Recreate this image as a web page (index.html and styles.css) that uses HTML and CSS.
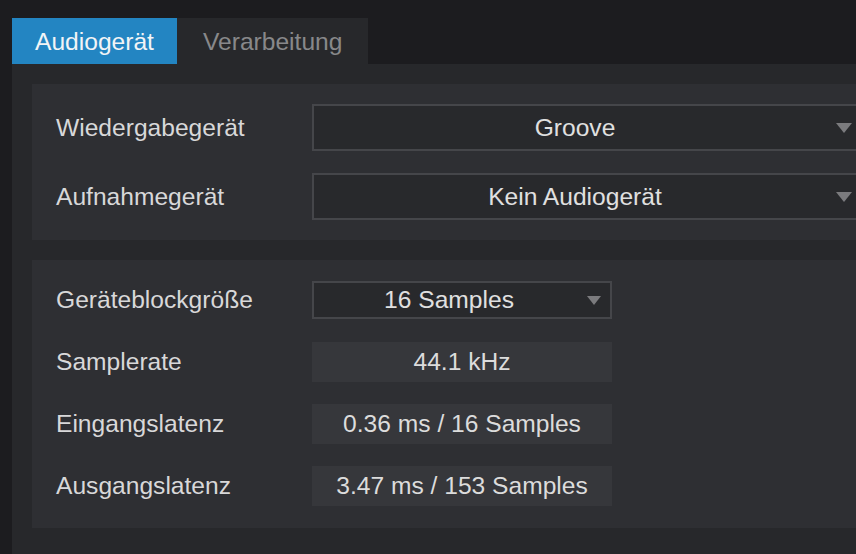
FILE: index.html
```html
<!DOCTYPE html>
<html lang="de">
<head>
  <meta charset="UTF-8">
  <title>Audio-Einstellungen</title>
  <link rel="stylesheet" href="styles.css">
</head>
<body>
  <div class="tabs">
    <div class="tab aktiv">Audiogerät</div>
    <div class="tab">Verarbeitung</div>
  </div>
  <div class="panel">
    <div class="gruppe">
      <div class="zeile gross">
        <div class="label">Wiedergabegerät</div>
        <div class="auswahl breit">Groove</div>
      </div>
      <div class="zeile gross">
        <div class="label">Aufnahmegerät</div>
        <div class="auswahl breit">Kein Audiogerät</div>
      </div>
    </div>
    <div class="gruppe">
      <div class="zeile">
        <div class="label">Geräteblockgröße</div>
        <div class="auswahl klein">16 Samples</div>
      </div>
      <div class="zeile">
        <div class="label">Samplerate</div>
        <div class="wert">44.1 kHz</div>
      </div>
      <div class="zeile">
        <div class="label">Eingangslatenz</div>
        <div class="wert">0.36 ms / 16 Samples</div>
      </div>
      <div class="zeile">
        <div class="label">Ausgangslatenz</div>
        <div class="wert">3.47 ms / 153 Samples</div>
      </div>
    </div>
  </div>
</body>
</html>
```

FILE: styles.css
```css
body {
  margin: 0;
  background: #1c1c1f;
  font-family: 'Liberation Sans', Arial, sans-serif;
  font-size: 24.6px;
  color: #dadada;
  height: 554px;
  overflow: hidden;
  display: flex;
  flex-direction: column;
}
.tabs {
  display: flex;
  padding: 18px 0 0 12px;
}
.tab {
  height: 46px;
  line-height: 48px;
  padding: 0 26px;
  background: #27282b;
  color: #88888a;
}
.tab.aktiv {
  background: #2385c2;
  color: #f2f4f6;
  padding: 0 23px;
}
.panel {
  flex: 1;
  margin-left: 12px;
  background: #27282b;
  padding: 20px 0 0 20px;
}
.gruppe {
  background: #2e2f33;
  padding: 20px 0 20px 24px;
  margin-bottom: 20px;
  display: flex;
  flex-direction: column;
  gap: 22px;
}
.gruppe + .gruppe {
  padding-bottom: 22px;
}
.zeile {
  display: flex;
  align-items: center;
  height: 40px;
}
.zeile.gross {
  height: 47px;
}
.label {
  width: 256px;
  flex-shrink: 0;
  color: #d8d8d9;
}
.auswahl {
  position: relative;
  box-sizing: border-box;
  border: 2px solid #45464a;
  background: #28292c;
  text-align: center;
  color: #e0e0e0;
  flex-shrink: 0;
}
.auswahl::after {
  content: "";
  position: absolute;
  top: 50%;
  margin-top: -5px;
  border-left: 8px solid transparent;
  border-right: 8px solid transparent;
  border-top: 10px solid #7b7b7e;
}
.auswahl.breit {
  flex: 1;
  height: 47px;
  line-height: 43px;
  border-right: none;
  padding-right: 20px;
}
.auswahl.breit::after {
  right: 4px;
}
.auswahl.klein {
  width: 300px;
  height: 38px;
  line-height: 34px;
  padding-right: 26px;
}
.auswahl.klein::after {
  right: 9px;
  margin-top: -4px;
  border-left-width: 7px;
  border-right-width: 7px;
  border-top-width: 9px;
}
.wert {
  width: 300px;
  height: 40px;
  line-height: 40px;
  background: #36373b;
  text-align: center;
  color: #dcdcdc;
  flex-shrink: 0;
}
```
